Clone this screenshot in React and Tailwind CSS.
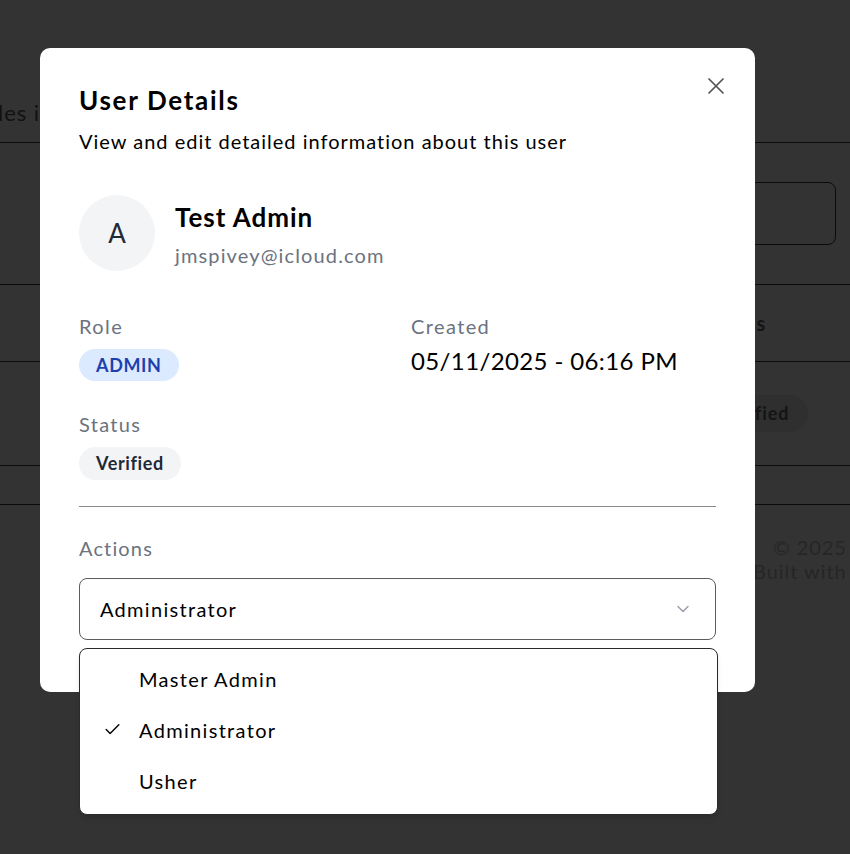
import React from 'react';
import { Check, ChevronDown } from 'lucide-react';

const roles = ['Master Admin', 'Administrator', 'Usher'];

const BackgroundPage = () => (
    <div className="h-[854px] w-full overflow-hidden bg-[#333333] text-[#141414]">
        <div className="h-[143px] border-b border-[#0c0c0c] flex items-end pb-[15px]">
            <p className="-ml-[2px] whitespace-nowrap text-[22px] leading-7 text-[#121212]">les in the system</p>
        </div>
        <div className="h-[142px] border-b border-[#0c0c0c] flex justify-end pt-[39px] pr-[14px]">
            <div className="h-[63px] w-[300px] rounded-[8px] border border-[#0c0c0c]"></div>
        </div>
        <div className="h-[77px] border-b border-[#0c0c0c] flex items-center pl-[705px]">
            <span className="whitespace-nowrap text-[20px] font-bold">Status</span>
        </div>
        <div className="h-[104px] border-b border-[#0c0c0c] flex items-center pl-[701px]">
            <span className="whitespace-nowrap rounded-full bg-[#2f2f2f] px-[18px] py-[5px] text-[18px] font-bold">Verified</span>
        </div>
        <div className="h-[39px] border-b border-[#0c0c0c]"></div>
        <div className="pt-[30px] text-[20px] leading-6 text-[#262626] whitespace-nowrap">
            <p className="pl-[773px]">© 2025 Portal</p>
            <p className="pl-[753px]">Built with care</p>
        </div>
    </div>
);

const App = () => {
    return (
        <div className="relative min-h-[854px] font-['Lato','Noto_Sans',sans-serif] tracking-[0.06em]">
            <BackgroundPage />

            {/* dialog */}
            <div className="absolute left-[40px] top-[48px] h-[644px] w-[715px] rounded-[10px] bg-white px-[39px] pt-[36px]">
                <button className="absolute right-[29px] top-[28px] p-[2px] text-[#555]">
                    <svg width="16" height="16" viewBox="0 0 16 16" fill="none" stroke="currentColor" strokeWidth="1.7" strokeLinecap="round">
                        <path d="M1 1L15 15M15 1L1 15" />
                    </svg>
                </button>

                <h2 className="text-[26px] leading-8 font-bold tracking-[0.065em] text-black">User Details</h2>
                <p className="mt-[11px] text-[20px] leading-7 tracking-[0.05em] text-black">View and edit detailed information about this user</p>

                <div className="mt-[40px] flex items-center gap-[20px]">
                    <div className="flex h-[76px] w-[76px] items-center justify-center rounded-full bg-[#f3f4f6] text-[26px] tracking-normal text-[#1f2937]">
                        A
                    </div>
                    <div className="pt-[4px]">
                        <p className="text-[26px] leading-8 font-bold text-black">Test Admin</p>
                        <p className="mt-[8px] text-[20px] leading-7 tracking-[0.057em] text-[#6b7280]">jmspivey@icloud.com</p>
                    </div>
                </div>

                <div className="mt-[41px] grid grid-cols-2 gap-x-[27px]">
                    <div>
                        <p className="text-[20px] leading-7 tracking-[0.07em] text-[#6b7280]">Role</p>
                        <span className="mt-[9px] inline-flex h-[32px] items-center rounded-full bg-[#dbeafe] px-[17px] text-[18px] font-bold tracking-[0.035em] text-[#1e40af]">
                            ADMIN
                        </span>
                    </div>
                    <div>
                        <p className="text-[20px] leading-7 tracking-[0.07em] text-[#6b7280]">Created</p>
                        <p className="mt-[5px] text-[24px] leading-8 tracking-[0.016em] text-black">05/11/2025 - 06:16 PM</p>
                    </div>
                </div>

                <div className="mt-[29px]">
                    <p className="text-[20px] leading-7 tracking-[0.065em] text-[#6b7280]">Status</p>
                    <span className="mt-[9px] inline-flex h-[33px] items-center rounded-full bg-[#f3f4f6] px-[17px] text-[18px] font-bold tracking-[0.035em] text-[#1f2937]">
                        Verified
                    </span>
                </div>

                <div className="mt-[26px] h-px bg-[#8a8a8a]"></div>

                <p className="mt-[27px] text-[20px] leading-7 tracking-[0.057em] text-[#6b7280]">Actions</p>

                <div className="relative mt-[16px]">
                    <button className="flex h-[62px] w-full items-center justify-between rounded-[8px] border border-[#5c5c5c] pl-[20px] pr-[22px] text-[20px] tracking-[0.065em] text-black">
                        <span>Administrator</span>
                        <ChevronDown size={20} className="text-[#6b7280] opacity-70" strokeWidth={1.6} />
                    </button>

                    <div className="absolute left-0 top-[70px] w-[639px] rounded-[8px] border border-[#2a2a2a] bg-white pt-[4px] pb-[8px] shadow-md">
                        {roles.map(role => (
                            <div key={role} className="flex h-[51px] items-center pl-[23px] text-[20px] tracking-[0.066em] text-black">
                                <span className="flex w-[36px] items-center">
                                    {role === 'Administrator' && <Check size={19} strokeWidth={1.8} />}
                                </span>
                                <span>{role}</span>
                            </div>
                        ))}
                    </div>
                </div>
            </div>
        </div>
    );
};

export default App;
